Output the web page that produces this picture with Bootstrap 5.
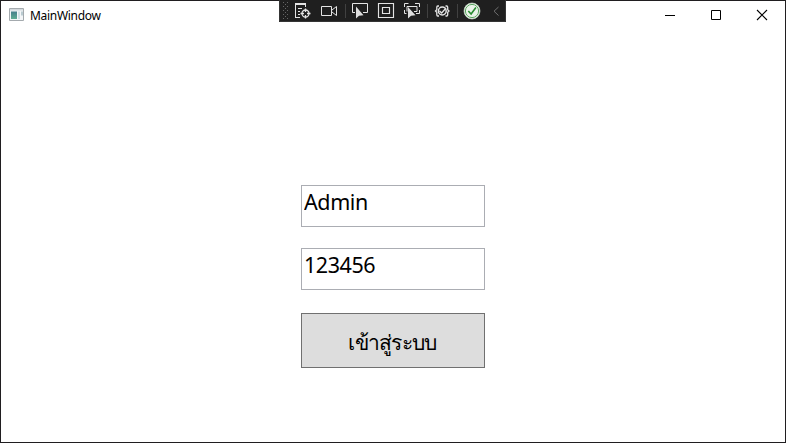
<!DOCTYPE html>
<html lang="th">
<head>
<meta charset="utf-8">
<title>MainWindow</title>
<link href="https://cdn.jsdelivr.net/npm/bootstrap@5.3.0/dist/css/bootstrap.min.css" rel="stylesheet">
<style>
html, body { height: 100%; }
body { font-family: "Noto Sans", "Open Sans", sans-serif; color: #000; overflow: hidden; }
.app-window { width: 786px; height: 443px; border: 1px solid #201e20; background: #fff; }
.title-bar { height: 29px; }
.title-text { font-size: 12px; line-height: 16px; letter-spacing: -.3px; margin-left: 5px; }
.title-icon { margin-left: 8px; margin-bottom: 1px; }
.win-btn { width: 46px; height: 29px; border: 0; background: none; }
.debug-bar { left: 279px; top: 0; width: 227px; height: 22px; }
.login-form { width: 184px; margin-top: 155px; }
.field { height: 42px; padding: 0 2px 9px; border: 1px solid #abadb3; border-radius: 0; font-size: 21.5px; line-height: 30px; color: #000; background: #fff; }
.field:focus { box-shadow: none; border-color: #569de5; color: #000; }
.user-field { letter-spacing: -.4px; margin-bottom: 21px; }
.pass-field { letter-spacing: -.45px; margin-bottom: 23px; }
.login-btn { height: 55px; border: 1px solid #707070; border-radius: 0; background: #ddd; color: #000; font-size: 21px; letter-spacing: -.7px; line-height: 30px; padding: 3px 1px 0 0; }
</style>
</head>
<body>
<main class="app-window position-relative">
  <header class="title-bar d-flex align-items-center">
    <svg class="title-icon" width="16" height="14" viewBox="0 0 16 14">
      <defs><linearGradient id="pane" x2="0" y2="1"><stop stop-color="#477f8c"/><stop offset="1" stop-color="#60ad93"/></linearGradient></defs>
      <path d="M.5 .5h14v12H.5z" fill="#f4f6f8" stroke="#a4aaae"/>
      <path d="M1 1h13v1.500H1z" fill="#d3d8dc"/>
      <path d="M2 3.500h6V11H2z" fill="url(#pane)"/>
      <path d="M9 3.500h2V11H9z" fill="#d4e1e6"/><path d="M12 3.500h2v4h-2z" fill="#bacbd1"/>
    </svg>
    <span class="title-text">MainWindow</span>
    <div class="d-flex ms-auto">
      <button class="win-btn p-0 d-flex align-items-center justify-content-center" aria-label="Minimize"><svg width="46" height="29"><path d="M18 14.500h10" stroke="#000"/></svg></button>
      <button class="win-btn p-0 d-flex align-items-center justify-content-center" aria-label="Maximize"><svg width="46" height="29"><path d="M18.500 9.500h9v9h-9z" fill="none" stroke="#000"/></svg></button>
      <button class="win-btn p-0 d-flex align-items-center justify-content-center" aria-label="Close"><svg width="46" height="29"><path d="M18 9l10 10M28 9L18 19" stroke="#000" stroke-width="1.1"/></svg></button>
    </div>
  </header>
  <form class="login-form mx-auto d-flex flex-column">
    <input class="form-control field user-field" type="text" value="Admin" aria-label="Username">
    <input class="form-control field pass-field" type="text" value="123456" aria-label="Password">
    <button class="btn login-btn" type="button">เข้าสู่ระบบ</button>
  </form>
</main>
<svg class="debug-bar position-absolute" viewBox="0 0 227 22" fill="none" stroke="#e4e4e4">
  <defs><pattern id="grip" width="4" height="4" patternUnits="userSpaceOnUse" x="4" y="2"><path d="M0 0h1v1H0zM2 2h1v1H2z" fill="#666" stroke="none"/></pattern></defs>
  <path d="M0 0h227v22H0z" fill="#1f1f1f" stroke="none"/>
  <path d="M.5 0v21.500h226V0" stroke="#353535"/>
  <path d="M4 2h5v18H4z" fill="url(#grip)" stroke="none"/>
  <!-- live visual tree -->
  <path d="M16 4h11" stroke-width="2"/>
  <path d="M16.500 4v14M26.500 4v3M19 8.500h4M19 11.500h2M19 14.500h2M16 17.500h5"/>
  <circle cx="26.500" cy="13.500" r="3.500" stroke-width="1.300"/>
  <path d="M26.500 8.500v3.500M26.500 15v3.500M21.500 13.500h3.500M28 13.500h3.500" stroke-width="1.300"/>
  <!-- camera -->
  <path d="M42.500 6.500h10v9h-10zM53 10l4.500-3.500v9L53 12"/>
  <path d="M66.500 4v14M148.500 4v14M178.500 4v14" stroke="#414141"/>
  <!-- select element -->
  <path d="M76 12.500h-2.500v-9h15v9H84"/>
  <path d="M77 6.500v12l3-2.700 4.500-.5z" fill="#dedede" stroke="none"/>
  <!-- layout adorners -->
  <path d="M99.500 3.500h15v14h-15zM103.500 7.500h7v6h-7z" stroke-width="1.150"/>
  <!-- track focused element -->
  <path d="M125.500 7V3.500h4M136 3.500h4.500V7M125.500 10v3.500h2M140.500 10v3.500H137"/>
  <path d="M128 11.500v-5h10v5h-3"/>
  <path d="M129 7v11.500l3-2.700 4.500-.5z" fill="#dedede" stroke="none"/>
  <!-- binding failures -->
  <path d="M160 6h-1.200q-1 0-1 1.200v2.500L156.500 11l1.300 1.300v2.500q0 1.200 1 1.200h1.200M166.500 6h1.200q1 0 1 1.200v2.500L170 11l-1.300 1.300v2.500q0 1.200-1 1.200h-1.200" stroke-width="1.300"/>
  <circle cx="163.300" cy="11" r="3.900" stroke-width="1.500"/><path d="M160.500 11l2.200 2 4.300-5" stroke-width="1.300"/>
  <!-- hot reload status -->
  <circle cx="193" cy="11" r="8" fill="#e9f3e8" stroke="#c5d5c5" stroke-width=".7"/>
  <circle cx="193" cy="11" r="6.600" stroke="#4b9b50" stroke-width=".9"/>
  <path d="M189.300 11l2.800 3 4.800-6.400" stroke="#278b30" stroke-width="1.600"/>
  <path d="M219.500 7l-4.500 4.200 4.500 4.300" stroke="#707070"/>
</svg>
</body>
</html>
